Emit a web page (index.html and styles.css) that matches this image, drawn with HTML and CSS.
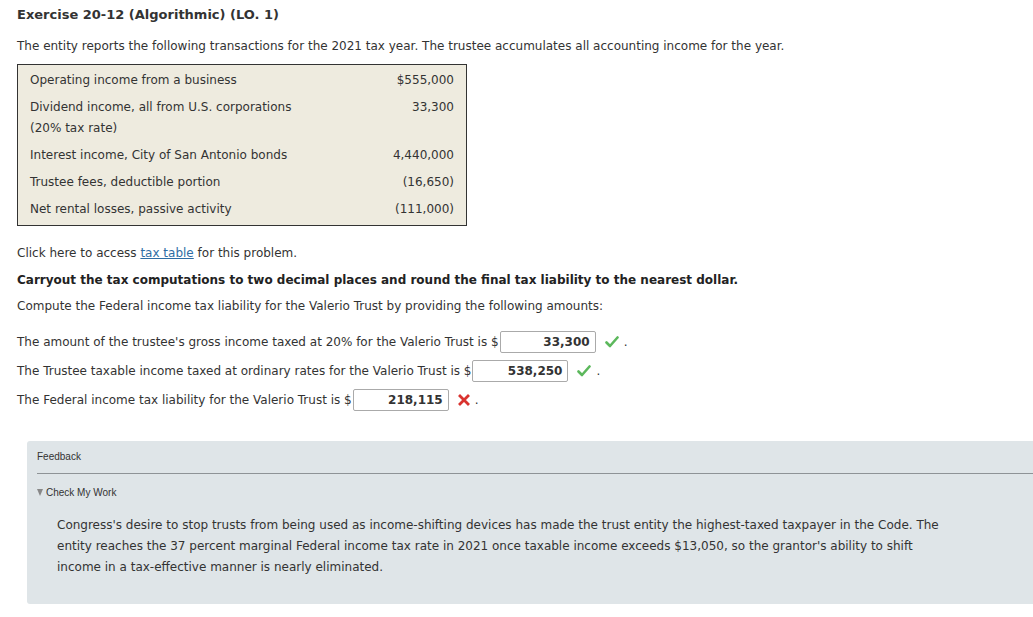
FILE: index.html
```html
<!DOCTYPE html>
<html>
<head>
<meta charset="utf-8">
<link rel="stylesheet" href="styles.css">
</head>
<body>
<div class="page">
  <h1 class="title">Exercise 20-12 (Algorithmic) (LO. 1)</h1>
  <p class="intro">The entity reports the following transactions for the 2021 tax year. The trustee accumulates all accounting income for the year.</p>
  <table class="data">
    <tr><td class="lbl">Operating income from a business</td><td class="val">$555,000</td></tr>
    <tr><td class="lbl">Dividend income, all from U.S. corporations<br>(20% tax rate)</td><td class="val">33,300</td></tr>
    <tr><td class="lbl">Interest income, City of San Antonio bonds</td><td class="val">4,440,000</td></tr>
    <tr><td class="lbl">Trustee fees, deductible portion</td><td class="val">(16,650)</td></tr>
    <tr><td class="lbl">Net rental losses, passive activity</td><td class="val">(111,000)</td></tr>
  </table>
  <p class="click">Click here to access <a href="#" class="link">tax table</a> for this problem.</p>
  <p class="bold">Carryout the tax computations to two decimal places and round the final tax liability to the nearest dollar.</p>
  <p class="compute">Compute the Federal income tax liability for the Valerio Trust by providing the following amounts:</p>
  <div class="answers">
    <div class="ans">The amount of the trustee's gross income taxed at 20% for the Valerio Trust is $<span class="box">33,300</span><svg class="mark" width="14" height="12" viewBox="0 0 14 12"><path d="M1.5 6.5 L5 10 L12.5 1.5" fill="none" stroke="#5cb85c" stroke-width="2.6" stroke-linecap="round" stroke-linejoin="round"/></svg><span class="dot">.</span></div>
    <div class="ans">The Trustee taxable income taxed at ordinary rates for the Valerio Trust is $<span class="box">538,250</span><svg class="mark" width="14" height="12" viewBox="0 0 14 12"><path d="M1.5 6.5 L5 10 L12.5 1.5" fill="none" stroke="#5cb85c" stroke-width="2.6" stroke-linecap="round" stroke-linejoin="round"/></svg><span class="dot">.</span></div>
    <div class="ans">The Federal income tax liability for the Valerio Trust is $<span class="box">218,115</span><svg class="mark" width="12" height="12" viewBox="0 0 12 12"><path d="M2 2 L10 10 M10 2 L2 10" fill="none" stroke="#d9332f" stroke-width="2.8" stroke-linecap="square"/></svg><span class="dot">.</span></div>
  </div>
  <div class="feedback">
    <div class="fb-head">Feedback</div>
    <div class="fb-rule"></div>
    <div class="fb-check"><span class="tri"></span>Check My Work</div>
    <p class="fb-text">Congress's desire to stop trusts from being used as income-shifting devices has made the trust entity the highest-taxed taxpayer in the Code. The entity reaches the 37 percent marginal Federal income tax rate in 2021 once taxable income exceeds $13,050, so the grantor's ability to shift income in a tax-effective manner is nearly eliminated.</p>
  </div>
</div>
</body>
</html>
```
FILE: styles.css
```css
html, body { margin: 0; padding: 0; background: #fff; }
body {
  font-family: "DejaVu Sans", Verdana, sans-serif;
  font-size: 12px;
  color: #333;
}
.page { padding: 0 0 0 17px; }
.title {
  margin: 0;
  padding-top: 6px;
  font-size: 13px;
  font-weight: bold;
  line-height: 17px;
  color: #333;
}
.intro { margin: 15px 0 0 0; line-height: 17px; }
.data {
  margin-top: 9px;
  border: 1px solid #333;
  background: #eeebdf;
  border-collapse: collapse;
  width: 450px;
}
.data td { padding: 3px 12px 3px 12px; line-height: 21px; vertical-align: top; }
.data tr:first-child td { padding-top: 5px; }
.data tr:last-child td { padding-bottom: 5px; }
.data .val { text-align: right; }
.click { margin: 19px 0 0 0; line-height: 17px; }
.link { color: #2e6da4; text-decoration: underline; }
.bold { margin: 10px 0 0 0; font-weight: bold; line-height: 17px; color: #222; }
.compute { margin: 9px 0 0 0; line-height: 17px; }
.answers { margin-top: 16px; display: flex; flex-direction: column; gap: 7px; }
.ans { display: flex; align-items: center; height: 22px; }
.box {
  display: inline-block;
  box-sizing: border-box;
  width: 96px;
  height: 22px;
  border: 1px solid #aaa;
  border-radius: 2px;
  text-align: right;
  padding: 0 5px;
  line-height: 20px;
  font-weight: bold;
  color: #333;
  margin-left: 1px;
  background: #fff;
}
.mark { margin-left: 9px; }
.dot { margin-left: 5px; }
.feedback {
  margin: 30px 0 15px 10px;
  background: #dfe5e8;
  border-radius: 3px 0 0 3px;
  padding: 10px 0 26px 10px;
}
.fb-head {
  font-family: "Liberation Sans", Arial, sans-serif;
  font-size: 10px;
  line-height: 12px;
  color: #333;
}
.fb-rule { height: 1px; background: #8e9396; margin-top: 10px; }
.fb-check {
  font-family: "Liberation Sans", Arial, sans-serif;
  font-size: 10px;
  line-height: 12px;
  margin-top: 13px;
  color: #333;
  display: flex;
  align-items: center;
}
.tri {
  width: 0; height: 0;
  border-left: 3.5px solid transparent;
  border-right: 3.5px solid transparent;
  border-top: 7px solid #888;
  margin-right: 3px;
  margin-top: -1px;
}
.fb-text {
  margin: 16px 0 0 20px;
  line-height: 21px;
  width: 890px;
  color: #333;
}
```
